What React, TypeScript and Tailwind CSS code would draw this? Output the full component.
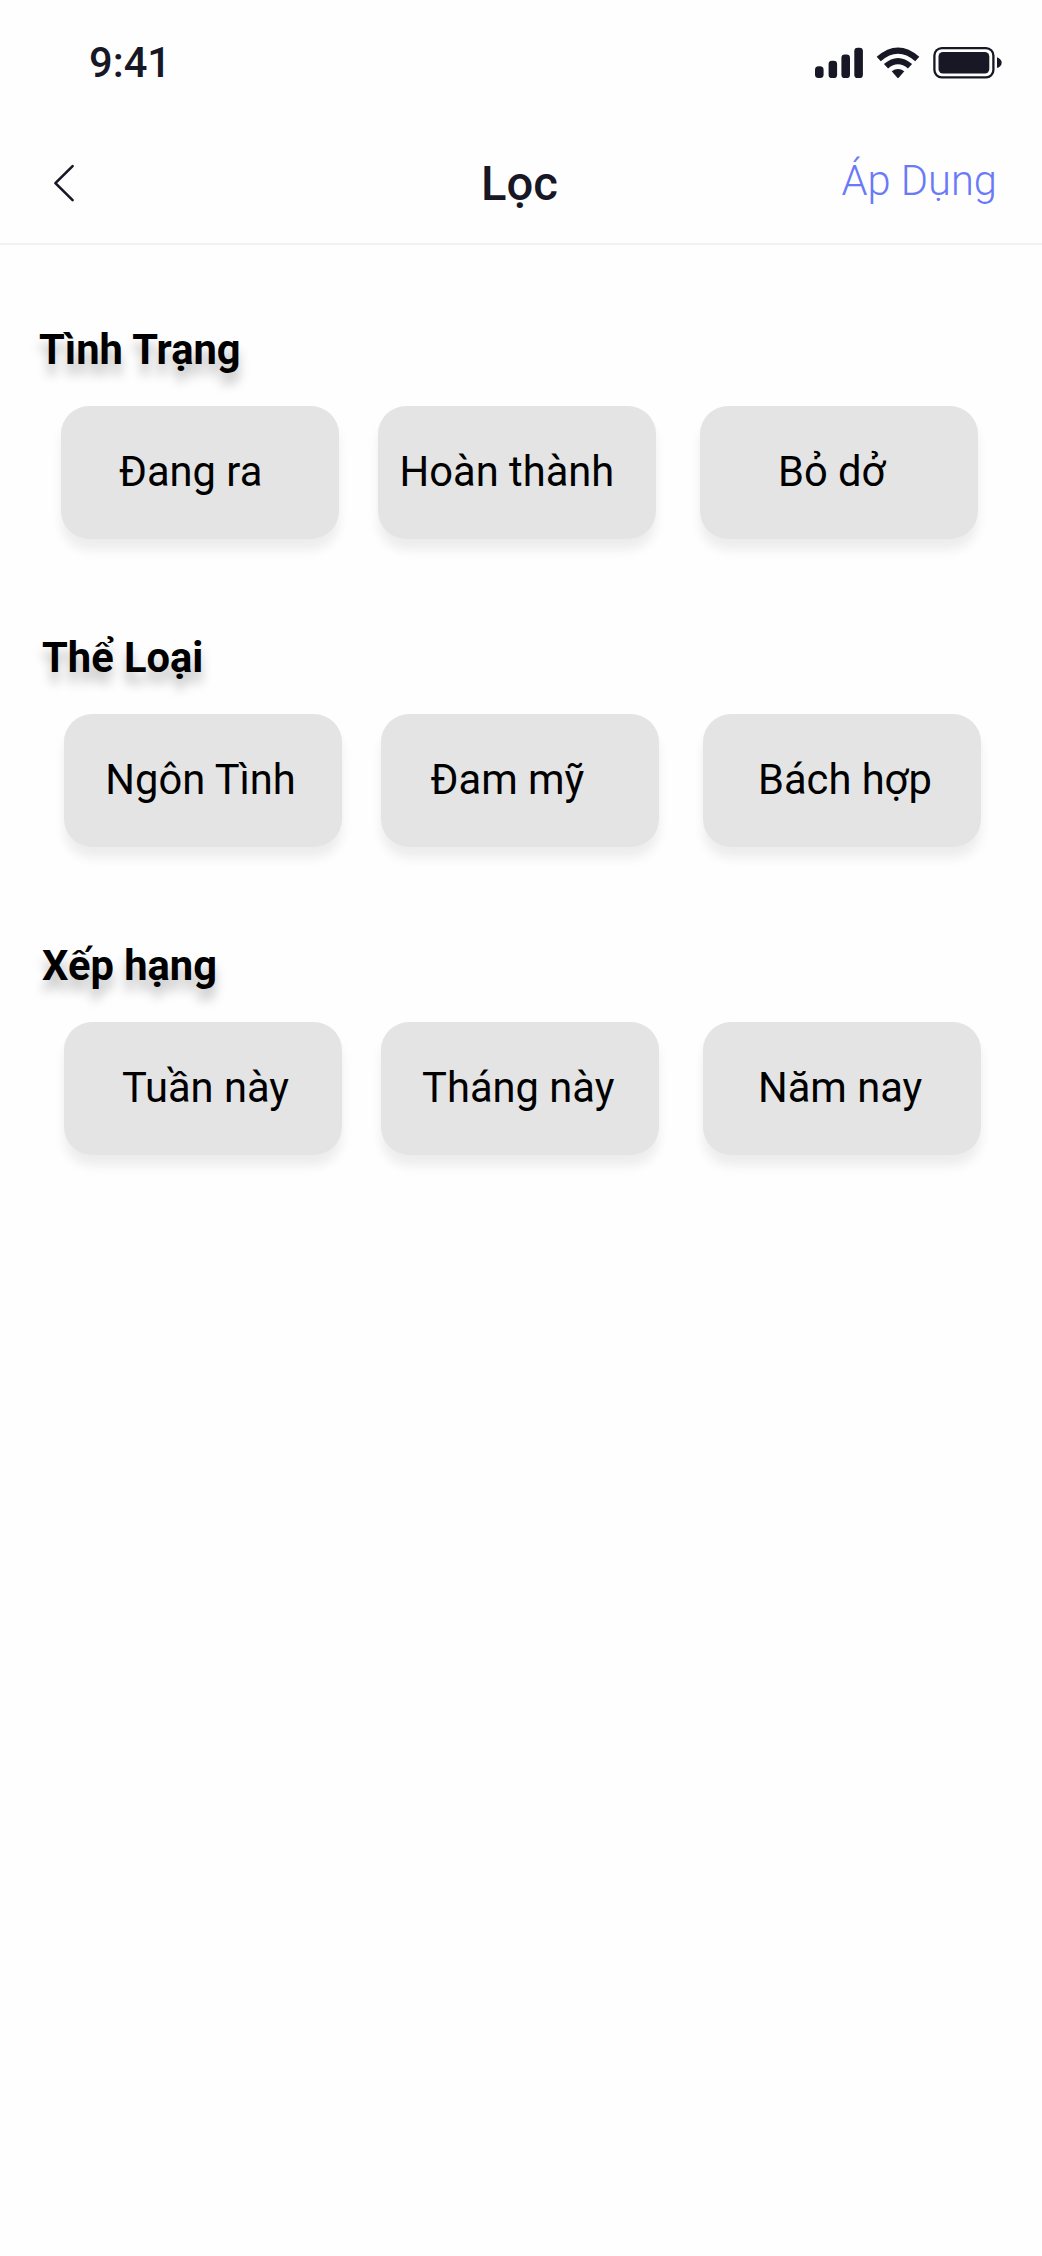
type Option = { label: string; pad: string };
type Section = { title: string; heading: string; row: string; options: Option[] };

const sections: Section[] = [
  {
    title: 'Tình Trạng',
    heading: 'pl-[39px]',
    row: 'pl-[61px]',
    options: [
      { label: 'Đang ra', pad: 'pl-[58px]' },
      { label: 'Hoàn thành', pad: 'pl-[22px]' },
      { label: 'Bỏ dở', pad: 'pl-[78px]' },
    ],
  },
  {
    title: 'Thể Loại',
    heading: 'pl-[42px]',
    row: 'pl-[64px]',
    options: [
      { label: 'Ngôn Tình', pad: 'pl-[41.3px]' },
      { label: 'Đam mỹ', pad: 'pl-[50px]' },
      { label: 'Bách hợp', pad: 'pl-[55px]' },
    ],
  },
  {
    title: 'Xếp hạng',
    heading: 'pl-[42px]',
    row: 'pl-[64px]',
    options: [
      { label: 'Tuần này', pad: 'pl-[58px]' },
      { label: 'Tháng này', pad: 'pl-[41.5px]' },
      { label: 'Năm nay', pad: 'pl-[55px]' },
    ],
  },
];

function StatusIcons() {
  return (
    <svg width="188" height="34" viewBox="814 46 188 34" fill="#171725" aria-hidden="true">
      <rect x="815" y="66.3" width="8.6" height="11.8" rx="3.6" />
      <rect x="828.6" y="60.7" width="8.5" height="17.4" rx="3.4" />
      <rect x="841.4" y="54.4" width="8.6" height="23.7" rx="3.4" />
      <rect x="854.3" y="47.8" width="8.6" height="30.3" rx="3.4" />
      <path d="M876.7 56.8Q898 38.2 919.3 56.8L915.2 61.2Q898 46.3 880.8 61.2Z" />
      <path d="M883.9 64.1Q898 51.7 912.1 64.1L907.9 68.4Q898 60 888.1 68.4Z" />
      <path d="M891.7 71.3Q898 66.6 904.3 71.3L898.9 77.6Q898 78.6 897.1 77.6Z" />
      <rect x="934.4" y="48.1" width="59" height="29.3" rx="7.4" fill="none" stroke="#171725" strokeWidth="2.3" />
      <rect x="938.5" y="51.9" width="50.8" height="21.7" rx="4.6" />
      <path d="M997 57.3C999.8 58.4 1001.7 60.3 1001.7 62.7S999.8 67 997 68.1Z" />
    </svg>
  );
}

export default function App() {
  return (
    <main className="min-h-[2256px] w-[1042px] overflow-hidden bg-[#fefefe] font-['Roboto',sans-serif] text-[41.67px] text-black">
      <div className="flex h-[122px] items-start justify-between pt-[46px] pr-[40px] pl-[89px] text-[#171725]">
        <span className="leading-[34px] font-medium">9:41</span>
        <StatusIcons />
      </div>

      <header className="grid h-[123px] grid-cols-[1fr_auto_1fr] items-center border-b-2 border-[#f1f1f1] pr-[45px] pl-[45px]">
        <button aria-label="Quay lại" className="w-[36px]">
          <svg width="36" height="40" viewBox="45 163 36 40" fill="none" stroke="#171725" strokeWidth="2.6" strokeLinecap="round" strokeLinejoin="round">
            <path d="M72.6 166.2L55.4 183.2L72.6 200.2" />
          </svg>
        </button>
        <h1 className="pt-[3px] pr-[3px] text-[47.2px] leading-[60px] font-medium text-[#171725]">Lọc</h1>
        <button className="justify-self-end pb-[3px] leading-[50px] font-light text-[#6979f8]">Áp Dụng</button>
      </header>

      {sections.map((section) => (
        <section key={section.title} className="h-[308px] pt-[80px]">
          <h2 className={`${section.heading} h-[81px] leading-[50px] font-bold [text-shadow:0_11px_11px_rgb(0_0_0/0.25)]`}>
            {section.title}
          </h2>
          <div className={`flex ${section.row}`}>
            {section.options.map((option, k) => (
              <button
                key={option.label}
                className={`${option.pad} ${k === 0 ? 'mr-[38.6px]' : 'mr-[44.4px]'} h-[133px] w-[278px] shrink-0 rounded-[28px] bg-[#e4e4e4] text-left whitespace-nowrap shadow-[0_11px_11px_rgb(0_0_0/0.07)]`}
              >
                {option.label}
              </button>
            ))}
          </div>
        </section>
      ))}
    </main>
  );
}
